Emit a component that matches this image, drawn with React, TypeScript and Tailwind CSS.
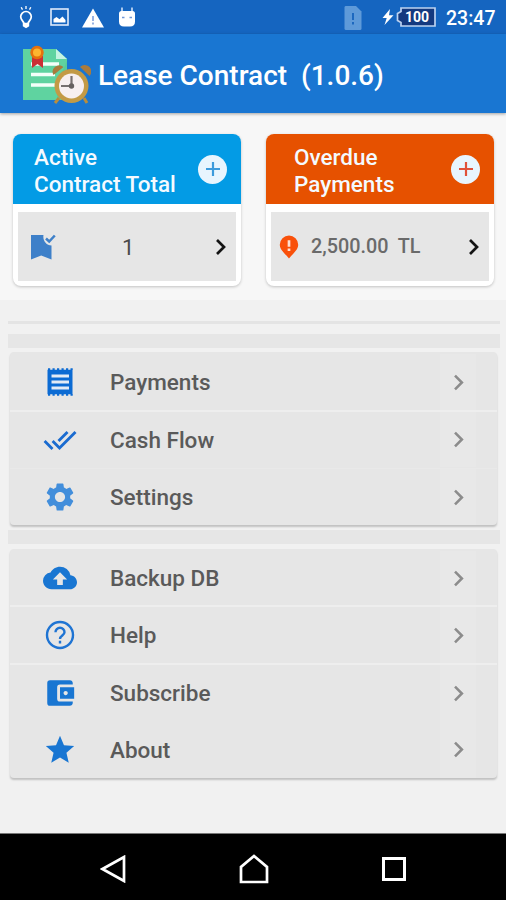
import type { ComponentType, ReactNode } from 'react';
import {
  MdAccountBalanceWallet,
  MdBackup,
  MdChevronRight,
  MdDoneAll,
  MdSettings,
  MdStar,
} from 'react-icons/md';

interface MenuItem {
  label: string;
  icon: ComponentType<{ className?: string }>;
  color: string;
  row: string;
}

function ReceiptIcon({ className }: { className?: string }) {
  return (
    <svg className={className} viewBox="0 0 34 34" fill="none" stroke="currentColor">
      <path d="M4.500 4.700h25v24.600h-25z" fill="currentColor" stroke="none" />
      <path d="M5 4.100h25M5 29.900h25" strokeWidth="1.600" strokeDasharray="2.200 2.300" />
      <path d="M8.500 11h17.500M8.500 17h17.500M8.500 23h17.500" stroke="#e3ebf5" strokeWidth="2.900" />
    </svg>
  );
}

function HelpIcon({ className }: { className?: string }) {
  return (
    <svg className={className} viewBox="0 0 34 34" fill="none" stroke="currentColor" strokeWidth="2.400">
      <circle cx="17" cy="17" r="13" />
      <path d="M12.500 14.300a4.500 4.500 0 1 1 9 0c0 3.200-4.500 3.300-4.500 6.700M17 22.800v2.700" />
    </svg>
  );
}

const MAIN_MENU: MenuItem[] = [
  { label: 'Payments', icon: ReceiptIcon, color: 'text-[#0c6bd3]', row: 'h-[60px] border-b-2 border-[#eeeeee] pt-[2px]' },
  { label: 'Cash Flow', icon: MdDoneAll, color: 'text-[#1a6bd0]', row: 'h-[57px] border-b border-[#e9e9e9] pb-px' },
  { label: 'Settings', icon: MdSettings, color: 'text-[#428edb]', row: 'h-[56px]' },
];

const OTHER_MENU: MenuItem[] = [
  { label: 'Backup DB', icon: MdBackup, color: 'text-[#1976d2]', row: 'h-[58px] border-b-2 border-[#eeeeee] pt-[2px]' },
  { label: 'Help', icon: HelpIcon, color: 'text-[#1f74d3]', row: 'h-[58px] border-b-2 border-[#eeeeee]' },
  { label: 'Subscribe', icon: MdAccountBalanceWallet, color: 'text-[#1976d2]', row: 'h-[56px]' },
  { label: 'About', icon: MdStar, color: 'text-[#1976d2]', row: 'h-[57px]' },
];

function StatusBar() {
  return (
    <div className="flex h-[34px] items-center bg-[#1565c0] text-white">
      {/* Notifications */}
      <svg className="ml-[17px] h-[24px] w-[18px]" viewBox="0 0 18 24" fill="none" stroke="currentColor" strokeWidth="1.700">
        <path d="M7 18.500C6.800 16.500 3.700 15.200 3.700 11.800a5.300 5.300 0 0 1 10.600 0c0 3.400-3.100 4.700-3.300 6.700" />
        <path d="M5.800 17.800h6.400v3.400L9 23.200l-3.200-2z" fill="currentColor" stroke="none" />
        <path d="M9 1v3M4.200 2.200l1.300 2.400M13.800 2.200l-1.300 2.400" strokeWidth="1.300" />
      </svg>
      <svg className="ml-[15px] h-[18px] w-[19px]" viewBox="0 0 19 18">
        <rect x="1" y="1" width="17" height="16" fill="none" stroke="#dfeafa" strokeWidth="1.600" />
        <path d="M3.500 14.500v-3.500l3-2 3 2.300 3-2.800 3 3.500v2.500z" fill="currentColor" />
      </svg>
      <svg className="ml-[13px] mt-[2px] h-[20px] w-[22px]" viewBox="0 0 22 20">
        <path d="M11 0.500 22 19.500H0z" fill="currentColor" />
        <path d="M11 8v5M11 14.500v2" stroke="#7e9fdb" strokeWidth="1.600" />
      </svg>
      <svg className="ml-[14px] h-[20px] w-[18px]" viewBox="0 0 18 20">
        <path d="M4 0.500v5M14 0.500v5" stroke="#cfe0f8" strokeWidth="1.600" />
        <path d="M1 6.500q0-2.500 2.500-2.500h11q2.500 0 2.500 2.500v8q0 5-5 5h-6q-5 0-5-5z" fill="currentColor" />
        <path d="M4 10.500h2.500M11.500 10.500h2.500" stroke="#6f97d8" strokeWidth="1.500" />
      </svg>

      {/* System state */}
      <svg className="mt-[2px] ml-auto h-[24px] w-[18px]" viewBox="0 0 18 24">
        <path d="M1.500 0H12l5.500 5.500v17q0 1.500-1.500 1.500H2q-1.500 0-1.500-1.500v-21q0-1.500 1-1.500z" fill="#5e9ad9" />
        <path d="M9 7v7M9 16v2.500" stroke="#1c68bf" strokeWidth="2" />
      </svg>
      <svg className="ml-[20px] h-[16px] w-[12px]" viewBox="0 0 12 16">
        <path d="M8 0 0.500 9h4.200L2.500 16 11.500 6.300H7z" fill="currentColor" />
      </svg>
      <div className="relative ml-[2px] h-[20px] w-[40px]">
        <svg className="absolute inset-0 h-full w-full" viewBox="0 0 40 20">
          <path d="M5 1H39V19H5V15.500L1.500 13.500V6.500L5 4.500z" fill="#14397f" stroke="#bcd2f0" strokeWidth="1.700" />
        </svg>
        <span className="relative block pl-[9px] text-[14px] leading-[20px] font-bold">100</span>
      </div>
      <span className="mr-[11px] ml-[10px] w-[49px] pt-[3px] text-[19.500px] leading-[31px] font-medium whitespace-nowrap">23:47</span>
    </div>
  );
}

function LeaseLogo() {
  return (
    <svg className="ml-[21px] h-[60px] w-[70px]" viewBox="0 0 70 60">
      <path d="M2 5h33l11 10v41H2z" fill="#5fd3a0" />
      <path d="M35 5v10h11z" fill="#c5f4e2" />
      <path d="M46 17v39H36V40z" fill="#4cc391" opacity=".4" />
      <path d="M10 20h28M10 30.500h24M10 41h24" stroke="#f4fff9" strokeWidth="3.500" />
      <path d="M11 12h11v12l-5.500-4-5.500 4z" fill="#cb2f35" />
      <circle cx="16" cy="8.500" r="6.700" fill="#e5710c" />
      <circle cx="16" cy="8.500" r="4" fill="#fdb62f" />
      {/* Alarm clock */}
      <path d="m38 54-4 5M63 54l3 5" stroke="#b98d3c" strokeWidth="3" />
      <path d="M32.500 31a6.500 6.500 0 0 1 10-8zM59 23a6.500 6.500 0 0 1 9.500 9z" fill="#a97b3c" />
      <circle cx="50.500" cy="42" r="17" fill="#c39a45" />
      <circle cx="50.500" cy="42" r="12.500" fill="#f7efef" />
      <path d="M50.500 32v10H40" fill="none" stroke="#77706f" strokeWidth="2.200" />
      <circle cx="50.500" cy="42" r="2.700" fill="#66605f" />
    </svg>
  );
}

function BookmarkCheckIcon() {
  return (
    <svg className="h-[26px] w-[26px]" viewBox="0 0 26 26">
      <path d="M1 1h12.500C12.500 6 16 11.500 21.500 11.500V25.500L11.200 21.500 1 25.500z" fill="#3e80c9" />
      <path d="m16 4.500 3.200 3L24.800 1.500" fill="none" stroke="#3e80c9" strokeWidth="2.500" />
    </svg>
  );
}

function PinAlertIcon() {
  return (
    <svg className="h-[24px] w-[20px]" viewBox="0 0 20 24">
      <path d="M10 0.500A9.200 9.200 0 0 0 0.800 9.700C0.800 14.500 5 17.500 10 23.500c5-6 9.200-9 9.200-13.800A9.200 9.200 0 0 0 10 0.500z" fill="#f9510b" />
      <path d="M10 5.300v6.500M10 13.500v2.500" stroke="#ffe0d2" strokeWidth="2.700" />
    </svg>
  );
}

function AddButton({ color }: { color: string }) {
  return (
    <button type="button" className={`flex h-[29px] w-[29px] items-center justify-center rounded-full bg-[#e8f5fe] ${color}`}>
      <svg className="h-[16px] w-[16px]" viewBox="0 0 16 16" stroke="currentColor" strokeWidth="2.200">
        <path d="M8 1v14M1 8h14" />
      </svg>
    </button>
  );
}

interface SummaryCardProps {
  title: ReactNode;
  headerClass: string;
  plusClass: string;
  children: ReactNode;
}

function SummaryCard({ title, headerClass, plusClass, children }: SummaryCardProps) {
  return (
    <div className="h-[152px] w-[228px] overflow-hidden rounded-lg bg-white shadow-[0_1px_3px_rgba(0,0,0,0.22)]">
      <div className={`flex h-[70px] items-center justify-between pr-[14px] ${headerClass}`}>
        <h2 className="pt-[4px] text-[22.500px] leading-[27px] font-medium whitespace-nowrap text-[#f4faff]">{title}</h2>
        <AddButton color={plusClass} />
      </div>
      <div className="mx-[5px] mt-[8px] flex h-[69px] items-center bg-[#e6e6e6]">
        {children}
        <svg className="mr-[9px] ml-auto h-[18px] w-[12px]" viewBox="0 0 12 18" fill="none" stroke="#141414" strokeWidth="2.700">
          <path d="m2 2 7 7-7 7" />
        </svg>
      </div>
    </div>
  );
}

function MenuCard({ items }: { items: MenuItem[] }) {
  return (
    <div className="ml-[10px] w-[487px] overflow-hidden rounded-[4px] bg-[#e6e6e6] shadow-[0_2px_2px_rgba(0,0,0,0.2)]">
      {items.map(({ label, icon: Icon, color, row }) => (
        <div key={label} className={`flex items-center ${row}`}>
          <Icon className={`ml-[33px] h-[34px] w-[34px] ${color}`} />
          <span className="ml-[33px] text-[22.500px] leading-[28px] font-medium text-[#5a5a5a]">{label}</span>
          <span className="ml-auto flex h-full w-[36px] items-center justify-center bg-[#e8e8e8]">
            <MdChevronRight className="h-[31px] w-[31px] shrink-0 text-[#8c8c8c]" />
          </span>
          <span className="w-[21px]" />
        </div>
      ))}
    </div>
  );
}

export default function App() {
  return (
    <div className="flex h-[900px] w-[506px] flex-col overflow-hidden bg-[#f1f1f1] font-[Roboto,sans-serif]">
      <StatusBar />
      <header className="z-10 flex h-[79px] items-center bg-[#1976d2] shadow-[0_1px_3px_rgba(0,0,0,0.35)]">
        <LeaseLogo />
        <h1 className="ml-[7px] pt-[4px] text-[28px] font-medium whitespace-pre text-white">Lease Contract  (1.0.6)</h1>
      </header>

      <section className="flex h-[187px] gap-[25px] bg-[#f7f7f7] pt-[21px] pl-[13px]">
        <SummaryCard title={<>Active<br />Contract Total</>} headerClass="bg-[#039be5] pl-[21px]" plusClass="text-[#3c9bdc]">
          <div className="ml-[12px]"><BookmarkCheckIcon /></div>
          <span className="ml-[66px] pt-[2px] text-[22px] text-[#4a4a4a]">1</span>
        </SummaryCard>
        <SummaryCard title={<>Overdue<br />Payments</>} headerClass="bg-[#e65100] pl-[28px]" plusClass="text-[#e0513a]">
          <div className="ml-[8px]"><PinAlertIcon /></div>
          <span className="ml-[12px] pt-[1px] text-[19.800px] font-medium whitespace-pre text-[#6a6a6a]">2,500.00  TL</span>
        </SummaryCard>
      </section>

      <div className="mt-[21px] ml-[8px] h-[3px] w-[492px] bg-[#e4e4e4]" />
      <div className="mt-[10px] mb-[4px] ml-[8px] h-[14px] w-[492px] bg-[#e6e6e6]" />
      <MenuCard items={MAIN_MENU} />
      <div className="mt-[5px] mb-[5px] ml-[8px] h-[14px] w-[492px] bg-[#e6e6e6]" />
      <MenuCard items={OTHER_MENU} />

      <nav className="mt-auto flex h-[67px] items-center border-t border-[#777777] bg-black pt-[4px] text-white">
        <svg className="ml-[100px] h-[28px] w-[26px]" viewBox="0 0 26 28" fill="none" stroke="currentColor" strokeWidth="2.700">
          <path d="M24 2v24L2.500 14z" />
        </svg>
        <svg className="ml-[113px] h-[30px] w-[30px]" viewBox="0 0 30 30" fill="none" stroke="currentColor" strokeWidth="2.700">
          <path d="M2 28V13L15 2l13 11v15z" />
        </svg>
        <svg className="ml-[112px] h-[26px] w-[26px]" viewBox="0 0 26 26" fill="none" stroke="currentColor" strokeWidth="3">
          <path d="M2.500 2.500h21v21h-21z" />
        </svg>
      </nav>
    </div>
  );
}
